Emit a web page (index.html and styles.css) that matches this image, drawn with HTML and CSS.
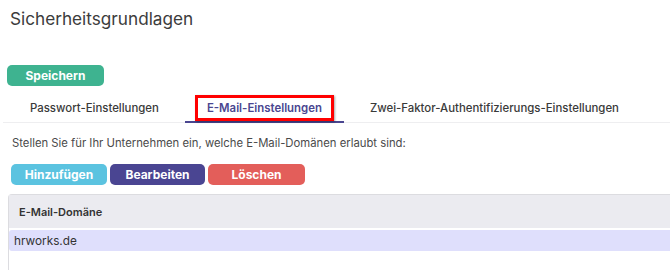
FILE: index.html
```html
<!DOCTYPE html>
<html lang="de">
<head>
<meta charset="utf-8">
<title>Sicherheitsgrundlagen</title>
<link rel="stylesheet" href="styles.css">
</head>
<body>
<div class="page">
  <h1 class="title">Sicherheitsgrundlagen</h1>
  <div class="save-row">
    <button class="btn btn-save">Speichern</button>
  </div>
  <nav class="tabs">
    <div class="tab">Passwort-Einstellungen</div>
    <div class="tab active">E-Mail-Einstellungen<span class="highlight"></span></div>
    <div class="tab">Zwei-Faktor-Authentifizierungs-Einstellungen</div>
  </nav>
  <p class="desc">Stellen Sie für Ihr Unternehmen ein, welche E-Mail-Domänen erlaubt sind:</p>
  <div class="actions">
    <button class="btn btn-add">Hinzufügen</button>
    <button class="btn btn-edit">Bearbeiten</button>
    <button class="btn btn-delete">Löschen</button>
  </div>
  <div class="grid">
    <div class="grid-head">E-Mail-Domäne</div>
    <div class="grid-row">hrworks.de</div>
  </div>
</div>
</body>
</html>
```
FILE: styles.css
```css
html, body {
  margin: 0;
  padding: 0;
  background: #fff;
  overflow: hidden;
}
body {
  font-family: Inter, "Noto Sans", sans-serif;
  color: #333;
}
.page {
  width: 700px;
  display: flex;
  flex-direction: column;
}
.title {
  margin: 8px 0 0 10px;
  font-size: 17.2px;
  line-height: 22px;
  font-weight: 400;
  color: #3c3c3c;
}
.save-row {
  margin-top: 34px;
  padding-left: 7px;
}
.btn {
  border: 0;
  border-radius: 5px;
  color: #fff;
  font-family: Inter, "Noto Sans", sans-serif;
  font-weight: 700;
  font-size: 12px;
  height: 21px;
  padding: 0;
  cursor: pointer;
}
.btn-save {
  width: 97px;
  background: #3eb390;
}
.tabs {
  display: flex;
  gap: 4px;
  margin-top: 10px;
  border-bottom: 1px solid #eeeef0;
  margin-left: 3px;
  padding-left: 5px;
}
.tab {
  position: relative;
  padding: 5px 22px 6px;
  font-size: 11.4px;
  line-height: 14px;
  font-weight: 500;
  color: #3a3a3a;
  border-bottom: 2px solid transparent;
  margin-bottom: -1px;
}
.tab.active {
  color: #4a4690;
  font-weight: 600;
  border-bottom-color: #4a4690;
}
.highlight {
  position: absolute;
  left: 10px;
  top: -1px;
  width: 133px;
  height: 20px;
  border: 3px solid #f00;
  box-shadow: 1px 1px 2px rgba(0,0,0,0.35);
}
.desc {
  margin: 12px 0 0 12px;
  font-size: 11.3px;
  line-height: 16px;
  color: #4a4a4a;
}
.actions {
  display: flex;
  gap: 3px;
  margin-top: 13px;
  padding-left: 11px;
}
.btn-add { width: 96px; background: #5bc3e0; }
.btn-edit { width: 95px; background: #4a4592; }
.btn-delete { width: 97px; background: #e35e5a; }
.grid {
  margin: 9px 0 0 8px;
  border: 1px solid #dcdce0;
  border-right: 0;
  border-bottom: 0;
  border-radius: 4px 0 0 0;
  height: 80px;
}
.grid-head {
  background: #ebebf0;
  height: 33px;
  display: flex;
  align-items: center;
  padding-left: 10px;
  font-size: 11px;
  font-weight: 600;
  color: #333;
}
.grid-row {
  margin-top: 2px;
  background: #dfdffc;
  height: 21px;
  display: flex;
  align-items: center;
  padding-left: 5px;
  font-size: 11.8px;
  color: #333;
  border-radius: 3px 0 0 3px;
}
```
